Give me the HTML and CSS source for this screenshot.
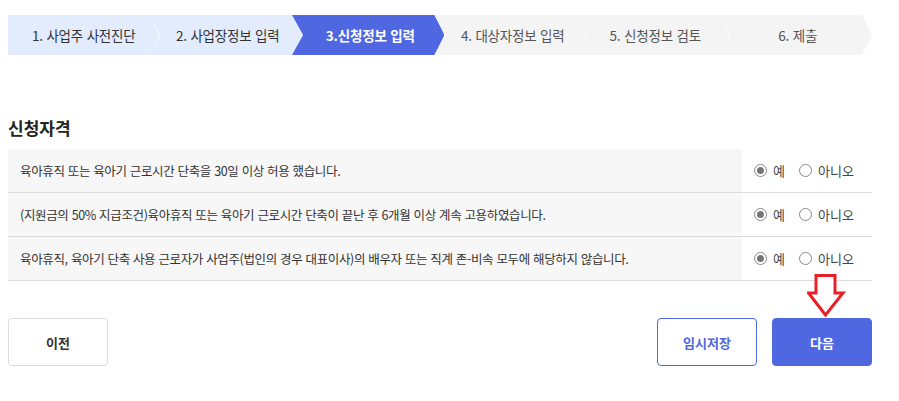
FILE: index.html
```html
<!DOCTYPE html>
<html lang="ko">
<head>
<meta charset="utf-8">
<link rel="stylesheet" href="styles.css">
</head>
<body>
<div class="page">
  <ol class="steps">
    <li class="step done first">1. 사업주 사전진단</li>
    <li class="step done">2. 사업장정보 입력</li>
    <li class="step active">3.신청정보 입력</li>
    <li class="step">4. 대상자정보 입력</li>
    <li class="step">5. 신청정보 검토</li>
    <li class="step">6. 제출</li>
  </ol>

  <h2 class="title">신청자격</h2>
  <div class="table">
    <div class="row">
      <div class="q">육아휴직 또는 육아기 근로시간 단축을 30일 이상 허용 했습니다.</div>
      <div class="a">
        <label class="radio"><span class="dot on"></span>예</label>
        <label class="radio"><span class="dot"></span>아니오</label>
      </div>
    </div>
    <div class="row">
      <div class="q">(지원금의 50% 지급조건)육아휴직 또는 육아기 근로시간 단축이 끝난 후 6개월 이상 계속 고용하였습니다.</div>
      <div class="a">
        <label class="radio"><span class="dot on"></span>예</label>
        <label class="radio"><span class="dot"></span>아니오</label>
      </div>
    </div>
    <div class="row">
      <div class="q">육아휴직, 육아기 단축 사용 근로자가 사업주(법인의 경우 대표이사)의 배우자 또는 직계 존-비속 모두에 해당하지 않습니다.</div>
      <div class="a">
        <label class="radio"><span class="dot on"></span>예</label>
        <label class="radio"><span class="dot"></span>아니오</label>
      </div>
    </div>
  </div>

  <div class="actions">
    <button class="btn prev">이전</button>
    <div class="right">
      <button class="btn save">임시저장</button>
      <button class="btn next">다음</button>
    </div>
    <svg class="arrow" width="40" height="44" viewBox="0 0 40 44">
      <path d="M9 1.5 H28 V19 H36 L18.5 41 L1.5 19 H9 Z" fill="#fff" stroke="#e8202a" stroke-width="3" stroke-linejoin="miter"/>
    </svg>
  </div>
</div>
</body>
</html>
```

FILE: styles.css
```css
* { box-sizing: border-box; }
html, body { margin: 0; padding: 0; background: #fff; }
body {
  font-family: "Noto Sans CJK KR", "Noto Sans", sans-serif;
  color: #333;
}
.page {
  width: 864px;
  margin-left: 8px;
  padding-top: 15px;
}
.steps {
  list-style: none;
  margin: 0;
  padding: 0;
  display: flex;
  height: 40px;
}
.step {
  width: 153px;
  height: 40px;
  margin-left: -10px;
  padding-left: 4px;
  display: flex;
  align-items: center;
  justify-content: center;
  font-size: 13.5px;
  color: #555;
  background: #f4f4f4;
  letter-spacing: -0.2px;
  clip-path: polygon(0 0, calc(100% - 10px) 0, 100% 50%, calc(100% - 10px) 100%, 0 100%, 11px 50%);
}
.step.first {
  margin-left: 0;
  width: 152px;
  padding-left: 0;
  clip-path: polygon(0 0, calc(100% - 10px) 0, 100% 50%, calc(100% - 10px) 100%, 0 100%);
}
.step.done { background: #e2ecfd; color: #333; }
.step.active { background: #4f67e0; color: #fff; font-weight: 700; }

.title {
  margin: 60px 0 0;
  font-size: 17px;
  font-weight: 700;
  color: #222;
  line-height: 26px;
  height: 34px;
}
.table { width: 864px; }
.row {
  display: flex;
  height: 44px;
  border-bottom: 1px solid #dcdcdc;
}
.q {
  width: 734px;
  background: #f7f7f7;
  display: flex;
  align-items: center;
  padding-left: 12px;
  font-size: 12.5px;
  color: #333;
  letter-spacing: -0.35px;
}
.a {
  flex: 1;
  display: flex;
  align-items: center;
  padding-left: 12px;
  gap: 14px;
  font-size: 13px;
  color: #444;
}
.radio {
  display: flex;
  align-items: center;
  gap: 6px;
}
.dot {
  width: 13px;
  height: 13px;
  border-radius: 50%;
  border: 1px solid #8a8a8a;
  background: #fff;
  position: relative;
}
.dot.on::after {
  content: "";
  position: absolute;
  left: 2px; top: 2px;
  width: 7px; height: 7px;
  border-radius: 50%;
  background: #777;
}

.actions {
  position: relative;
  margin-top: 37px;
  display: flex;
  justify-content: space-between;
}
.right { display: flex; gap: 15px; }
.btn {
  width: 100px;
  height: 48px;
  border-radius: 4px;
  font-family: inherit;
  font-size: 13px;
  font-weight: 700;
  background: #fff;
  cursor: pointer;
}
.prev { border: 1px solid #dcdcdc; color: #333; }
.save { border: 1px solid #4f67e0; color: #4f67e0; }
.next { border: 1px solid #4f67e0; background: #4f67e0; color: #fff; }
.arrow {
  position: absolute;
  left: 799px;
  top: -44px;
}
```
